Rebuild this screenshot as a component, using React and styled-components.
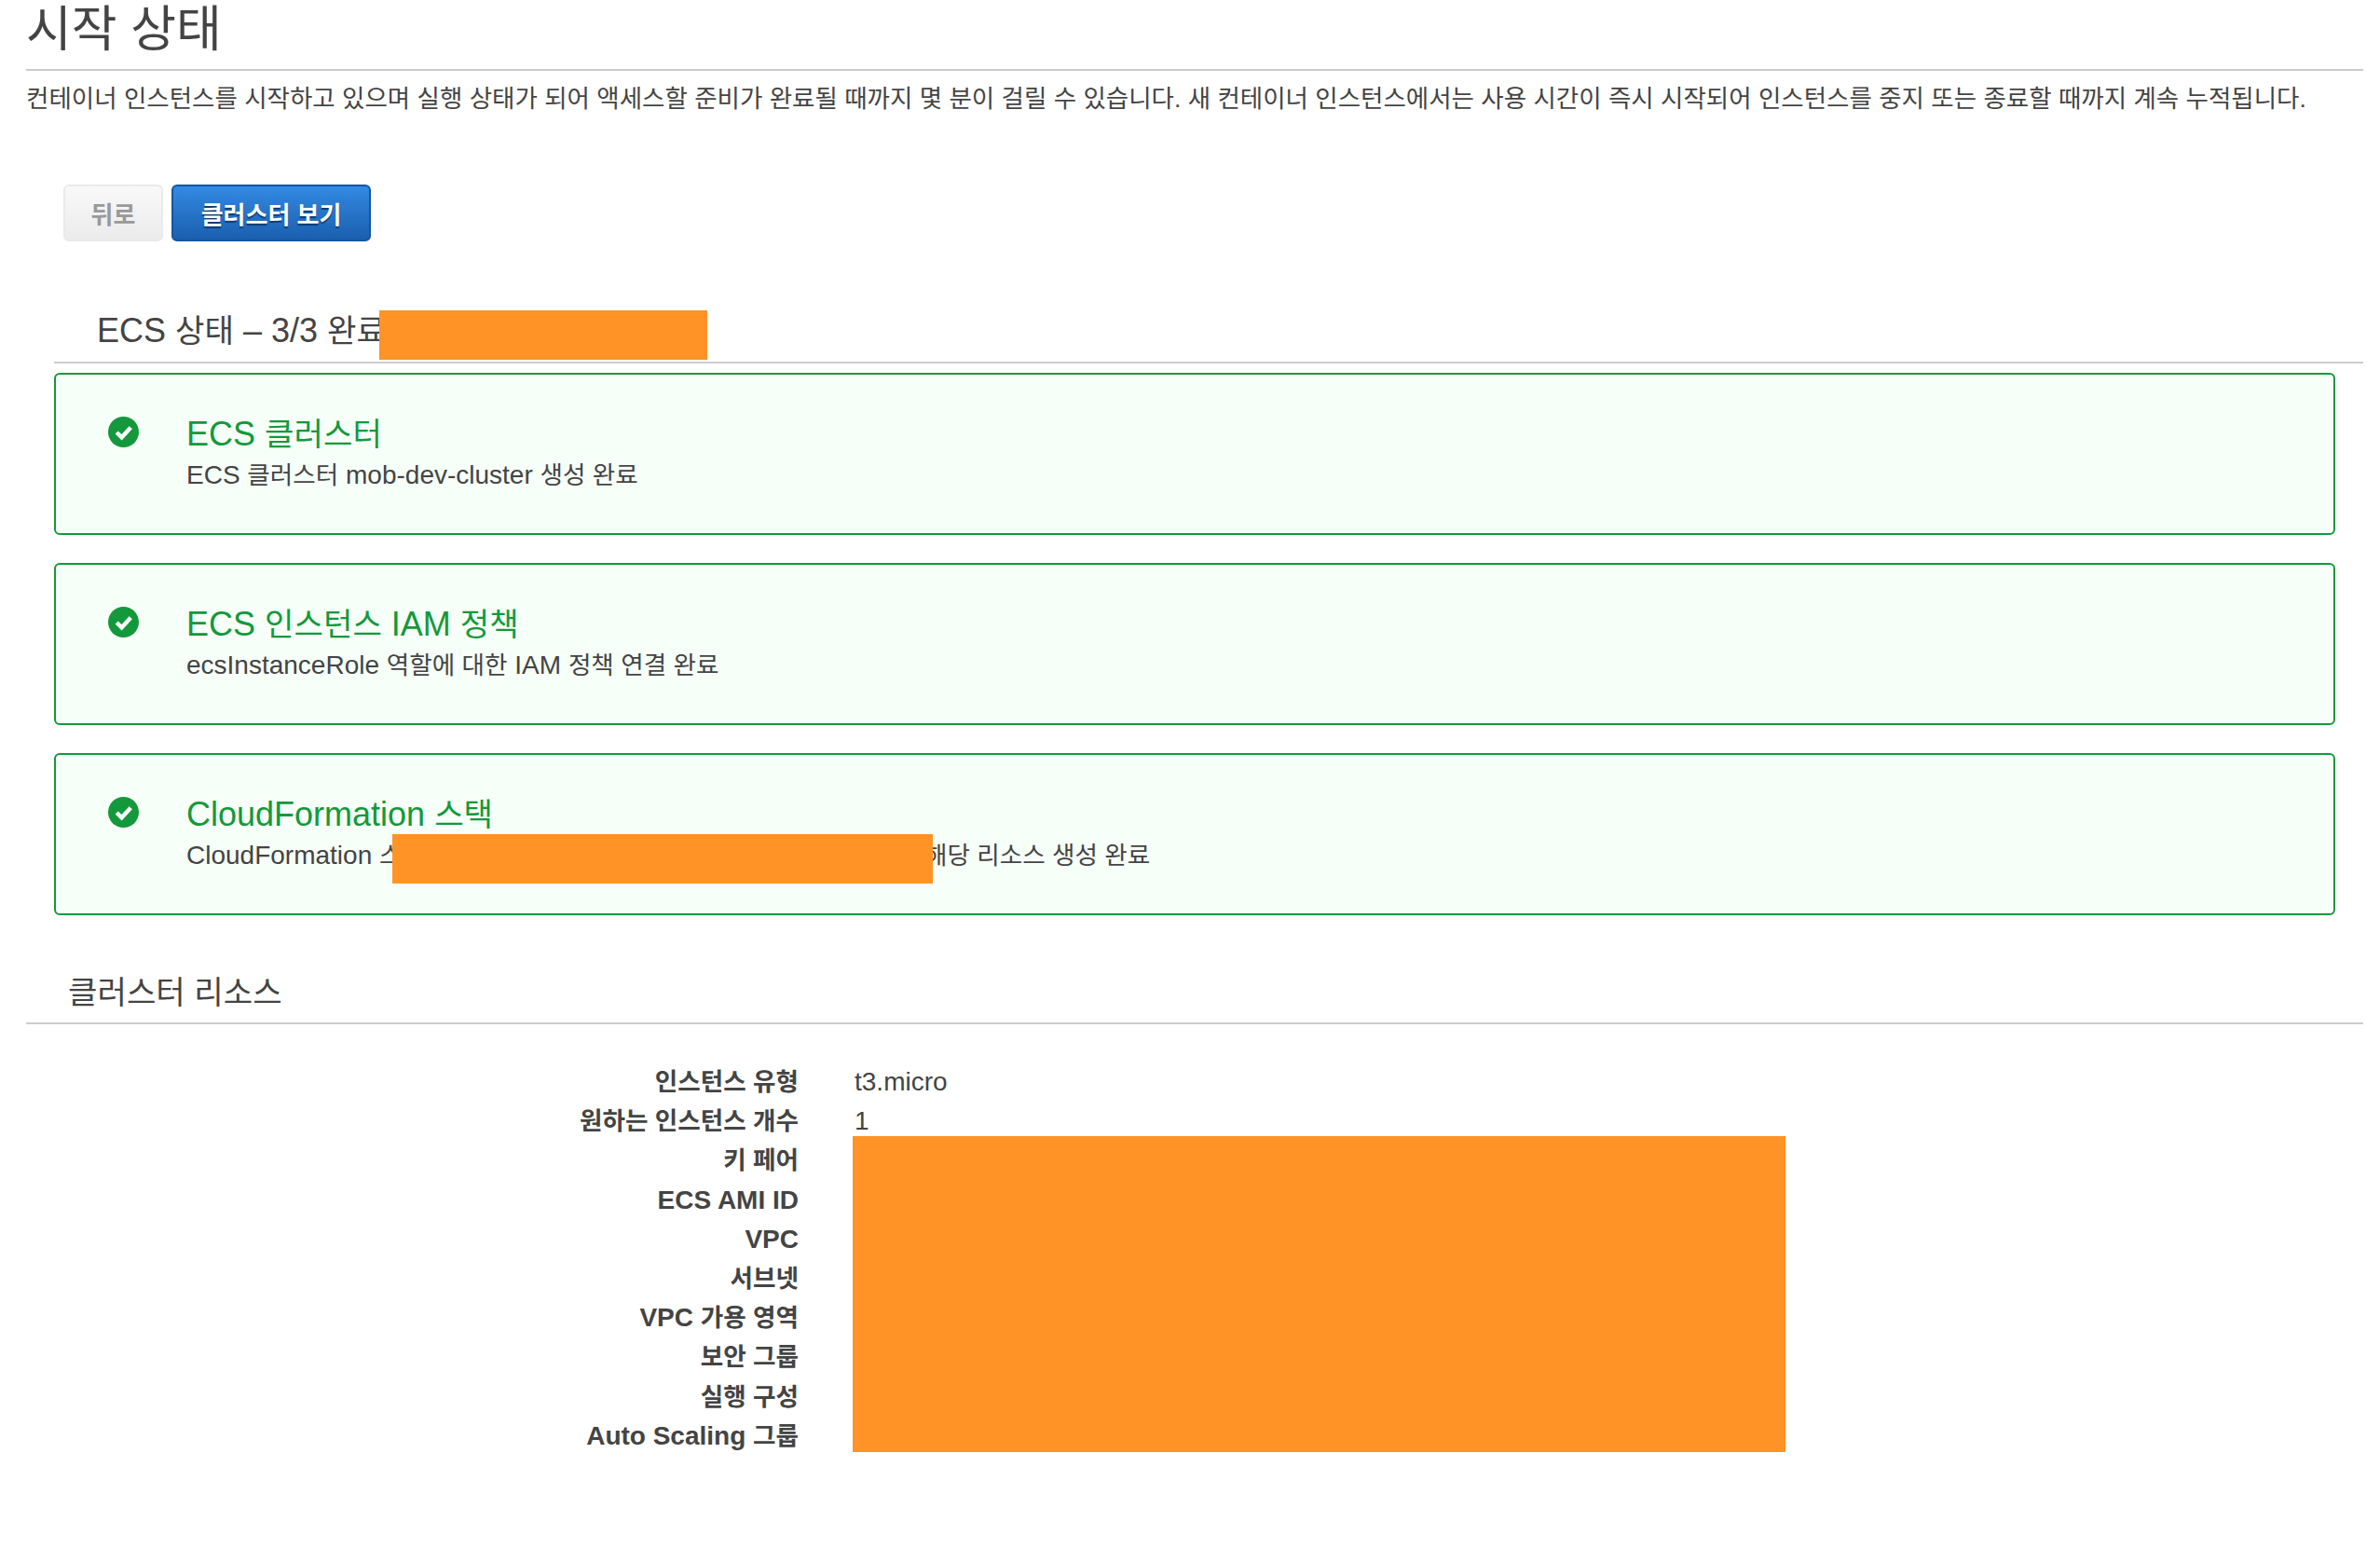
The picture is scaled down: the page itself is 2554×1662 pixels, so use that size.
import React from "react";
import styled, { createGlobalStyle } from "styled-components";

const GlobalStyle = createGlobalStyle`
  html, body {
    margin: 0;
    padding: 0;
    background: #fff;
    color: #444;
    font-family: "Liberation Sans", "Noto Sans CJK KR", sans-serif;
  }
`;

const steps = [
  {
    title: "ECS 클러스터",
    text: "ECS 클러스터 mob-dev-cluster 생성 완료",
  },
  {
    title: "ECS 인스턴스 IAM 정책",
    text: "ecsInstanceRole 역할에 대한 IAM 정책 연결 완료",
  },
  {
    title: "CloudFormation 스택",
    text: "CloudFormation 스택",
    tail: "해당 리소스 생성 완료",
  },
];

const resources = [
  ["인스턴스 유형", "t3.micro"],
  ["원하는 인스턴스 개수", "1"],
  ["키 페어", ""],
  ["ECS AMI ID", ""],
  ["VPC", ""],
  ["서브넷", ""],
  ["VPC 가용 영역", ""],
  ["보안 그룹", ""],
  ["실행 구성", ""],
  ["Auto Scaling 그룹", ""],
];

// the korean runs sit a bit smaller than the latin ones in the original
const Mixed = ({ children }) =>
  children.split(/([가-힣]+(?:\s+[가-힣]+)*)/).map((part, i) =>
    i % 2 ? <Ko key={i}>{part}</Ko> : part
  );

const CheckIcon = () => (
  <svg width="33" height="33" viewBox="0 0 34 34">
    <circle cx="17" cy="17" r="17" fill="#13993b" />
    <path d="M9.5 17.5l5.5 5.5 10-11" fill="none" stroke="#fff" strokeWidth="4.6" />
  </svg>
);

export default function App() {
  return (
    <Page>
      <GlobalStyle />
      <Title>시작 상태</Title>
      <Intro>
        컨테이너 인스턴스를 시작하고 있으며 실행 상태가 되어 액세스할 준비가 완료될 때까지 몇 분이 걸릴 수 있습니다. 새 컨테이너 인스턴스에서는 사용 시간이 즉시 시작되어 인스턴스를 중지 또는 종료할 때까지 계속 누적됩니다.
      </Intro>
      <Actions>
        <BackButton>뒤로</BackButton>
        <PrimaryButton>클러스터 보기</PrimaryButton>
      </Actions>
      <StatusSection>
        <StatusHeading>
          <Mixed>ECS 상태 – 3/3 완료</Mixed>
          <HeadingMask />
        </StatusHeading>
        <CardList>
          {steps.map((step) => (
            <Card key={step.title}>
              <IconSlot>
                <CheckIcon />
              </IconSlot>
              <CardBody>
                <CardTitle>
                  <Mixed>{step.title}</Mixed>
                </CardTitle>
                <CardText>
                  <Mixed>{step.text}</Mixed>
                  {step.tail && (
                    <>
                      <TextMask />
                      <TailGap />
                      <Mixed>{step.tail}</Mixed>
                    </>
                  )}
                </CardText>
              </CardBody>
            </Card>
          ))}
        </CardList>
      </StatusSection>
      <ResourceHeading>
        <Mixed>클러스터 리소스</Mixed>
      </ResourceHeading>
      <ResourceTable>
        {resources.map(([label, value]) => (
          <ResourceRow key={label}>
            <ResourceLabel>
              <Mixed>{label}</Mixed>
            </ResourceLabel>
            <ResourceValue>{value}</ResourceValue>
          </ResourceRow>
        ))}
        <TableMask />
      </ResourceTable>
    </Page>
  );
}

const Ko = styled.span`
  font-size: 0.95em;
`;

const Page = styled.div`
  width: 2554px;
  height: 1662px;
  padding: 0 18px 0 28px;
  box-sizing: border-box;
  overflow: hidden;
`;

const Title = styled.h1`
  margin: 0;
  height: 74px;
  border-bottom: 2px solid #ccc;
  font-size: 53px;
  line-height: 64px;
  font-weight: 400;
  color: #444;
`;

const Intro = styled.p`
  margin: 14px 0 0;
  font-size: 26.5px;
  line-height: 32px;
  white-space: nowrap;
`;

const Actions = styled.div`
  display: flex;
  gap: 9px;
  margin: 76px 0 0 40px;
`;

const ButtonBase = styled.button`
  height: 61px;
  border-radius: 6px;
  font-family: inherit;
  font-size: 26px;
  font-weight: 700;
  padding: 0;
  box-sizing: border-box;
`;

const BackButton = styled(ButtonBase)`
  width: 107px;
  color: #999;
  background: linear-gradient(#f9f9f9, #ebebeb);
  border: 2px solid #eaeaea;
`;

const PrimaryButton = styled(ButtonBase)`
  width: 214px;
  color: #fff;
  text-shadow: 0 2px 1px #0d3a70;
  background: linear-gradient(#338ae2, #1a5fae);
  border: 2px solid #14569f;
`;

const StatusSection = styled.section`
  margin: 62px 0 0 30px;
`;

const StatusHeading = styled.h2`
  position: relative;
  margin: 0;
  height: 67px;
  padding-left: 46px;
  border-bottom: 2px solid #ccc;
  font-size: 36px;
  line-height: 68px;
  font-weight: 400;
`;

const HeadingMask = styled.span`
  position: absolute;
  left: 349px;
  top: 12px;
  width: 352px;
  height: 53px;
  background: #ff9326;
`;

const CardList = styled.div`
  display: flex;
  flex-direction: column;
  gap: 30px;
  margin-top: 10px;
  width: 2448px;
`;

const Card = styled.div`
  display: flex;
  height: 174px;
  box-sizing: border-box;
  border: 2px solid #13993b;
  border-radius: 6px;
  background: #f6fff8;
  padding: 45px 0 0 56px;
`;

const IconSlot = styled.div`
  width: 84px;
  flex: none;
`;

const CardBody = styled.div`
  flex: 1;
`;

const CardTitle = styled.div`
  font-size: 36px;
  line-height: 38px;
  color: #13993b;
`;

const CardText = styled.div`
  position: relative;
  font-size: 28px;
  line-height: 36px;
  margin-top: 7px;
`;

const TextMask = styled.span`
  position: absolute;
  left: 221px;
  top: -5px;
  width: 580px;
  height: 53px;
  background: #ff9326;
`;

const TailGap = styled.span`
  display: inline-block;
  width: 536px;
`;

const ResourceHeading = styled.h2`
  margin: 49px 0 0;
  height: 66px;
  padding-left: 45px;
  border-bottom: 2px solid #ccc;
  font-size: 36px;
  line-height: 68px;
  font-weight: 400;
`;

const ResourceTable = styled.div`
  position: relative;
  margin-top: 41px;
`;

const ResourceRow = styled.div`
  display: flex;
  height: 42.2px;
  line-height: 42px;
  font-size: 28px;
`;

const ResourceLabel = styled.div`
  width: 829px;
  flex: none;
  text-align: right;
  font-weight: 700;
`;

const ResourceValue = styled.div`
  margin-left: 60px;
`;

const TableMask = styled.div`
  position: absolute;
  left: 887px;
  top: 79px;
  width: 1001px;
  height: 339px;
  background: #ff9326;
`;
